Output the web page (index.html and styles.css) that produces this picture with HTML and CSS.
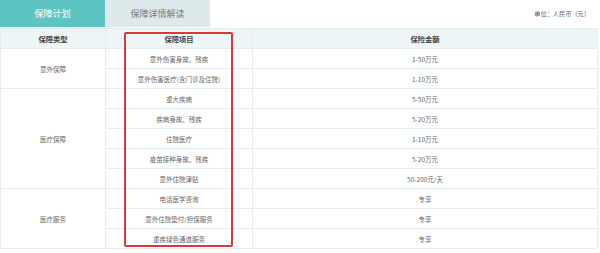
FILE: index.html
```html
<!DOCTYPE html>
<html lang="zh">
<head>
<meta charset="utf-8">
<link rel="stylesheet" href="styles.css">
</head>
<body>
<div class="page">
  <div class="topbar">
    <div class="tabs">
      <div class="tab active">保障计划</div>
      <div class="tab">保障详情解读</div>
    </div>
    <div class="unit">单位：人民币（元）</div>
  </div>
  <div class="tablewrap">
    <table class="plan">
      <colgroup><col class="c1"><col class="c2"><col class="c3"></colgroup>
      <thead>
        <tr><th>保障类型</th><th>保障项目</th><th>保险金额</th></tr>
      </thead>
      <tbody>
        <tr><td rowspan="2">意外保障</td><td>意外伤害身故、残疾</td><td>1-50万元</td></tr>
        <tr><td>意外伤害医疗(含门诊及住院)</td><td>1-10万元</td></tr>
        <tr><td rowspan="5">医疗保障</td><td>重大疾病</td><td>5-50万元</td></tr>
        <tr><td>疾病身故、残疾</td><td>5-20万元</td></tr>
        <tr><td>住院医疗</td><td>1-10万元</td></tr>
        <tr><td>疫苗接种身故、残疾</td><td>5-20万元</td></tr>
        <tr><td>意外住院津贴</td><td>50-200元/天</td></tr>
        <tr><td rowspan="3">医疗服务</td><td>电话医学咨询</td><td>专享</td></tr>
        <tr><td>意外住院垫付/担保服务</td><td>专享</td></tr>
        <tr><td>重疾绿色通道服务</td><td>专享</td></tr>
      </tbody>
    </table>
    <div class="highlight"></div>
  </div>
</div>
</body>
</html>
```
FILE: styles.css
```css
html, body {
  margin: 0;
  padding: 0;
  background: #ffffff;
}
body {
  font-family: "Noto Sans CJK SC", "Noto Sans", sans-serif;
  color: #666666;
}
.page {
  width: 600px;
}
.topbar {
  display: flex;
  justify-content: space-between;
  align-items: center;
  height: 28px;
}
.tabs {
  display: flex;
  height: 27px;
  align-self: flex-start;
}
.tab {
  width: 105px;
  height: 27px;
  line-height: 27px;
  text-align: center;
  font-size: 9px;
  color: #777777;
  background: #dde9ea;
}
.tab.active {
  background: #5ec4c1;
  color: #ffffff;
}
.unit {
  font-size: 6.2px;
  color: #666666;
  padding-right: 10px;
  margin-top: -1px;
}
.tablewrap {
  position: relative;
}
.plan {
  width: 598px;
  border-collapse: collapse;
  table-layout: fixed;
}
.c1 { width: 105px; }
.c2 { width: 147px; }
.plan th, .plan td {
  border: 1px solid #e4edef;
  text-align: center;
  padding: 0;
  height: 19px;
  font-size: 6.5px;
  font-weight: normal;
  color: #666666;
}
.plan th {
  background: #edf5f6;
  font-size: 7.3px;
  font-weight: bold;
  color: #444444;
  height: 19px;
}
.highlight {
  position: absolute;
  left: 124px;
  top: 4px;
  width: 105px;
  height: 211px;
  border: 2px solid #d83a35;
  border-radius: 2px;
}
```
